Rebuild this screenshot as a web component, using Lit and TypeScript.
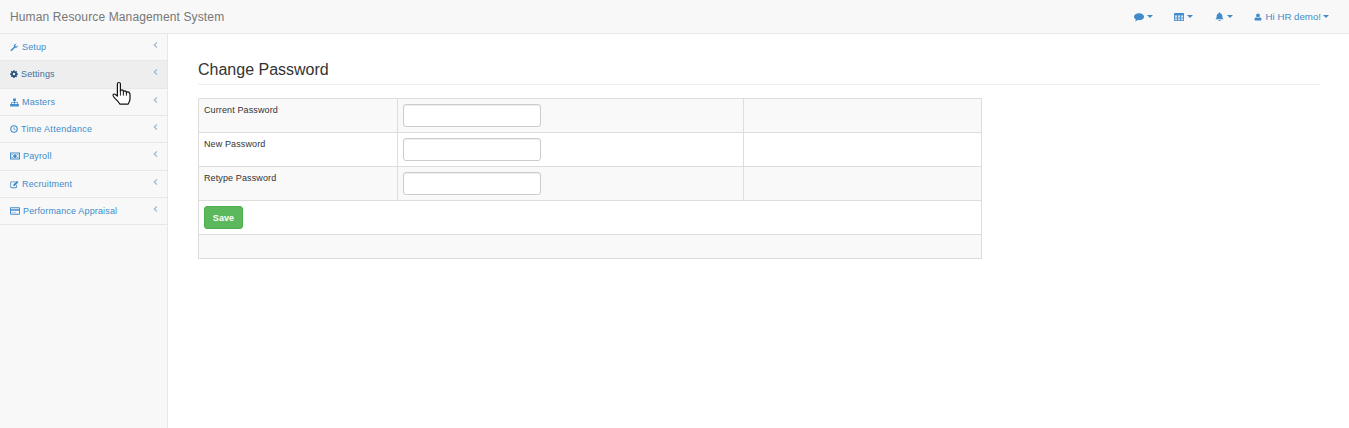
import { LitElement, html, css, svg } from "lit";
import { customElement } from "lit/decorators.js";

const icons: Record<string, any> = {
  wrench: svg`<path d="M1.200 12.300 7 6.600C6.300 4.300 7.800 1.700 11.500 1.500L9.300 3.800 9.800 5.700 11.700 6.200 14 4C14 7.300 11.300 9.200 8.900 8.500L3.100 14.200C2 15 .4 13.400 1.200 12.300Z"/>`,
  gear: svg`<path fill-rule="evenodd" d="M6.700 .5h2.600l.4 2 1.100.5 1.700-1.100 1.800 1.800-1.100 1.700.5 1.100 2 .4v2.600l-2 .4-.5 1.100 1.100 1.700-1.800 1.800-1.700-1.100-1.100.5-.4 2H6.700l-.4-2-1.100-.5-1.700 1.100-1.800-1.800 1.100-1.700-.5-1.100-2-.4V6.700l2-.4.500-1.100-1.100-1.700 1.800-1.800 1.700 1.100 1.100-.5ZM8 5.500a2.500 2.500 0 1 0 0 5 2.500 2.500 0 0 0 0-5Z"/>`,
  sitemap: svg`<path d="M5.500 1h5v4.500H8.700v2h5.200v3h1.800V15h-5v-4.500h1.800V9H8.700v1.500h1.800V15h-5v-4.500h1.800V9H3.500v1.500h1.800V15H.3v-4.500h1.800v-3h5.200v-2H5.500Z"/>`,
  clock: svg`<path fill-rule="evenodd" d="M8 .5a7.500 7.500 0 1 1 0 15A7.500 7.500 0 0 1 8 .5Zm0 2.200a5.300 5.300 0 1 0 0 10.600A5.300 5.300 0 0 0 8 2.700Zm-.8 1.600h1.600v3.500l2.300 1.300-.8 1.400-3.100-1.800Z"/>`,
  money: svg`<path fill-rule="evenodd" d="M0 2.500h16v11H0Zm1.500 1.500v8h13V4Zm6.500 1a3 3 0 1 1 0 6 3 3 0 0 1 0-6ZM2.500 5h2.500L2.500 7.500Zm8.500 0h2.500v2.500ZM2.500 8.500 5 11H2.500Zm11 0V11H11Z"/>`,
  edit: svg`<path fill-rule="evenodd" d="M2.800 2.500h7.700L9 4H2.800a.8.8 0 0 0-.8.800v7.400c0 .4.400.8.800.8h7.400c.4 0 .8-.4.800-.8V9.500l1.500-1.500v4.200c0 1.300-1 2.300-2.300 2.300H2.800C1.500 14.500.5 13.500.5 12.200V4.800c0-1.300 1-2.300 2.300-2.300Z"/><path d="M12.600 1.500 15 3.900 8.300 10.600H5.900V8.200Z"/>`,
  card: svg`<path fill-rule="evenodd" d="M1.500 2h13C15.300 2 16 2.700 16 3.500v9c0 .8-.7 1.500-1.500 1.500h-13C.7 14 0 13.300 0 12.500v-9C0 2.700.7 2 1.500 2ZM1.500 3.500V5h13V3.500ZM1.500 7.500v5h13v-5Zm1 2.800h3v1h-3Zm4 0h3v1h-3Z"/>`,
  comment: svg`<path d="M8 2c4.200 0 8 2.300 8 5.500S12.200 13 8 13c-.7 0-1.300 0-1.900-.1C5 13.900 3.400 14.600 1.500 15c.8-1 1.400-2 1.600-3.100C1.200 10.900 0 9.300 0 7.500 0 4.300 3.800 2 8 2Z"/>`,
  table: svg`<path fill-rule="evenodd" d="M1.500 1.500h13c.8 0 1.500.7 1.500 1.500v10c0 .8-.7 1.500-1.500 1.500h-13C.7 14.500 0 13.800 0 13V3c0-.8.700-1.500 1.500-1.500ZM1.300 5.700v1.800H5V5.700Zm5 0v1.800h3.400V5.700Zm4.700 0v1.800h3.700V5.700ZM1.300 8.700v1.800H5V8.700Zm5 0v1.800h3.400V8.700Zm4.700 0v1.800h3.700V8.700ZM1.300 11.700v1.500H5v-1.500Zm5 0v1.500h3.400v-1.500Zm4.700 0v1.500h3.700v-1.500Z"/>`,
  bell: svg`<path d="M8 0.500c.6 0 1 .4 1 1v.7c2.400.4 4 2.300 4 4.800 0 3.500 1 4.500 2.500 6H.5C2 11.500 3 10.500 3 7c0-2.500 1.600-4.400 4-4.800v-.7c0-.6.400-1 1-1ZM6 14h4a2 2 0 0 1-4 0Z"/>`,
  user: svg`<path d="M8 1a3.800 3.800 0 1 1 0 7.600A3.800 3.800 0 0 1 8 1ZM4.500 8.500C5.400 9.300 6.600 9.800 8 9.800s2.600-.5 3.500-1.300c2.200.2 3.500 1.700 3.500 4.400 0 1.300-.8 2.100-2 2.100H3c-1.200 0-2-.8-2-2.100 0-2.700 1.300-4.200 3.500-4.400Z"/>`,
};

const icon = (n: string, w?: number) =>
  html`<svg class="ic" style=${w ? `width:${w}px;height:${w}px` : ""} viewBox="0 0 16 16" fill="currentColor" aria-hidden="true">${icons[n]}</svg>`;

const menu = [
  { n: "wrench", w: 9, t: "Setup" },
  { n: "gear", w: 8, t: "Settings", tall: true, active: true },
  { n: "sitemap", w: 9, t: "Masters" },
  { n: "clock", w: 8, t: "Time Attendance", wide: true },
  { n: "money", w: 10, t: "Payroll", tall: true },
  { n: "edit", w: 9, t: "Recruitment" },
  { n: "card", w: 10, t: "Performance Appraisal" },
];

const rows = ["Current Password", "New Password", "Retype Password"];

@customElement("app-root")
export class AppRoot extends LitElement {
  static styles = css`
    :host {
      display: block;
      position: relative;
      height: 428px;
      overflow: hidden;
      font-family: "Liberation Sans", Arial, sans-serif;
      font-size: 9px;
      color: #333;
      background: #fff;
    }
    .ic { width: 10px; height: 10px; flex: none; display: block; }
    .nav {
      height: 33px;
      background: #f8f8f8;
      border-bottom: 1px solid #e7e7e7;
      display: flex;
      align-items: center;
      justify-content: space-between;
      padding: 0 20px 0 10px;
    }
    .brand { font-size: 12px; color: #777; letter-spacing: 0.13px; }
    .tools { display: flex; align-items: center; gap: 21px; }
    .tool { display: flex; align-items: center; gap: 3px; color: #428bca; font-size: 9.7px; }
    .caret {
      width: 0; height: 0;
      border-left: 3px solid transparent;
      border-right: 3px solid transparent;
      border-top: 3px solid currentColor;
    }
    .bell { margin-left: 1px; }
    .user .ic { width: 8px; height: 8px; margin-right: 1px; }
    .user span:not(.caret) { margin-right: -1px; }
    .body { display: flex; height: 394px; }
    .side {
      width: 167px;
      flex: none;
      background: #f8f8f8;
      border-right: 1px solid #e7e7e7;
    }
    .item {
      display: flex;
      align-items: center;
      box-sizing: border-box;
      height: 27px;
      border-bottom: 1px solid #e7e7e7;
      padding: 0 9px 0 10px;
      gap: 3px;
      color: #428bca;
      letter-spacing: 0.15px;
    }
    .item.tall { height: 28px; padding-bottom: 1px; }
    .item.wide { letter-spacing: 0.28px; }
    .item.active { background: #eee; color: #3f6f99; }
    .item.active .ic { color: #23527c; }
    .chev {
      margin-left: auto;
      width: 5px; height: 6px;
      margin-top: -5px;
      fill: none;
      stroke: #9db8cf;
      stroke-width: 1.100;
    }
    .main { flex: 1; padding: 25px 29px 0 30px; min-width: 0; }
    h1 {
      margin: 0 0 13px;
      font-size: 16px;
      line-height: 22px;
      font-weight: 400;
      color: #333;
      padding-bottom: 3px;
      border-bottom: 1px solid #eee;
    }
    table {
      border-collapse: collapse;
      width: 784px;
      table-layout: fixed;
      color: #333;
    }
    td {
      border: 1px solid #ddd;
      padding: 5px;
      box-sizing: border-box;
      vertical-align: top;
      line-height: 13px;
      letter-spacing: 0.12px;
    }
    tr.odd td { background: #f9f9f9; }
    tr.row td { height: 34px; }
    tr.foot td { height: 24px; background: #f9f9f9; padding: 0; }
    input {
      display: block;
      box-sizing: border-box;
      width: 138px;
      height: 23px;
      background: #fff;
      border: 1px solid #ccc;
      border-radius: 3px;
      box-shadow: inset 0 1px 1px rgba(0, 0, 0, 0.075);
      padding: 0 6px;
      margin: 0;
    }
    button {
      display: block;
      box-sizing: border-box;
      width: 39px;
      height: 23px;
      padding: 0;
      background: #5cb85c;
      border: 1px solid #4cae4c;
      border-radius: 3px;
      color: #fff;
      font: 700 9px "Liberation Sans", Arial, sans-serif;
      letter-spacing: 0.1px;
    }
    .cursor {
      position: absolute;
      left: 112px;
      top: 81px;
      width: 24px;
      height: 27px;
    }
  `;

  render() {
    return html`
      <div class="nav">
        <div class="brand">Human Resource Management System</div>
        <div class="tools">
          <div class="tool">${icon("comment")}<span class="caret"></span></div>
          <div class="tool">${icon("table")}<span class="caret"></span></div>
          <div class="tool bell">${icon("bell", 9)}<span class="caret"></span></div>
          <div class="tool user">${icon("user")}<span>Hi HR demo!</span><span class="caret"></span></div>
        </div>
      </div>
      <div class="body">
        <div class="side">
          ${menu.map(
            (m) => html`<div class="item ${m.active ? "active" : ""} ${m.tall ? "tall" : ""} ${m.wide ? "wide" : ""}">
              ${icon(m.n, m.w)}<span>${m.t}</span>
              <svg class="chev" viewBox="0 0 5 6"><path d="M4 .5 1.200 3 4 5.500"/></svg>
            </div>`
          )}
        </div>
        <div class="main">
          <h1>Change Password</h1>
          <table>
            <colgroup><col style="width:199px" /><col style="width:346px" /><col /></colgroup>
            ${rows.map(
              (r, i) => html`<tr class="row ${i % 2 === 0 ? "odd" : ""}">
                <td>${r}</td>
                <td><input type="password" aria-label=${r} /></td>
                <td></td>
              </tr>`
            )}
            <tr class="row"><td colspan="3"><button>Save</button></td></tr>
            <tr class="foot"><td colspan="3"></td></tr>
          </table>
        </div>
      </div>
      <svg class="cursor" viewBox="0 0 20 24" preserveAspectRatio="none">
        <path fill="#fff" stroke="#111" stroke-width="1" stroke-linejoin="round"
          d="M4.500 2.500C4.500 1 7 1 7 2.500V9c.2-1.500 2.500-1.500 2.500 0v.8c.2-1.400 2.500-1.400 2.500 0v.8c.2-1.300 2.500-1.200 2.500.2 0 0 .5 0 .5 1.200v4c0 2-1 3-1.500 4.500H6.500C5.500 18.500 4 17 2.500 15.500 1.500 14.300.5 12.800 1 12c.7-1 2-.2 3.500 1.500Z"/>
        <path fill="none" stroke="#111" stroke-width=".8" d="M7 9v4M9.500 9.800V13M12 10.500V13"/>
      </svg>
    `;
  }
}
